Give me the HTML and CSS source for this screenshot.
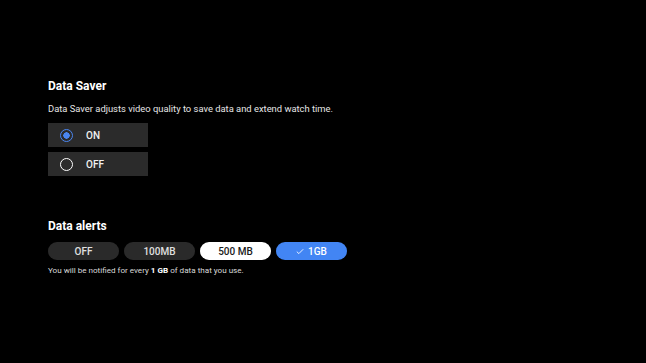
FILE: index.html
```html
<!DOCTYPE html>
<html>
<head>
<meta charset="utf-8">
<link rel="stylesheet" href="styles.css">
</head>
<body>
<main class="page">
  <section class="saver">
    <h2 class="title">Data Saver</h2>
    <p class="desc">Data Saver adjusts video quality to save data and extend watch time.</p>
    <div class="options">
      <div class="option">
        <span class="radio radio-on"></span>
        <span class="opt-label">ON</span>
      </div>
      <div class="option">
        <span class="radio"></span>
        <span class="opt-label">OFF</span>
      </div>
    </div>
  </section>
  <section class="alerts">
    <h2 class="title">Data alerts</h2>
    <div class="chips">
      <div class="chip">OFF</div>
      <div class="chip">100MB</div>
      <div class="chip chip-light">500 MB</div>
      <div class="chip chip-blue"><svg class="check" viewBox="0 0 10 8" width="8" height="7"><path d="M1 4.2 L3.6 6.6 L9 1.2" fill="none" stroke="#ffffff" stroke-width="1.1"/></svg>1GB</div>
    </div>
    <p class="note">You will be notified for every <b>1 GB</b> of data that you use.</p>
  </section>
</main>
</body>
</html>
```
FILE: styles.css
```css
html, body {
  margin: 0;
  padding: 0;
  background: #000000;
}
body {
  width: 646px;
  height: 363px;
  overflow: hidden;
  font-family: Roboto, "Liberation Sans", sans-serif;
  color: #ffffff;
}
.page {
  padding: 79px 0 0 48px;
}
.title {
  margin: 0;
  font-size: 12px;
  line-height: 15px;
  font-weight: 700;
  color: #ffffff;
}
.desc {
  margin: 8px 0 0 0;
  font-size: 9.4px;
  line-height: 13px;
  color: #e6e6e6;
}
.options {
  margin-top: 8px;
  display: flex;
  flex-direction: column;
  gap: 5px;
}
.option {
  width: 100px;
  height: 24px;
  background: #2b2b2b;
  display: flex;
  align-items: center;
  box-sizing: border-box;
  padding-left: 12px;
}
.radio {
  width: 13px;
  height: 13px;
  box-sizing: border-box;
  border: 1.6px solid #ffffff;
  border-radius: 50%;
  flex: none;
}
.radio-on {
  border-color: #4a86f0;
  background: radial-gradient(circle, #4a86f0 0 3px, transparent 3.4px);
}
.opt-label {
  margin-left: 13px;
  font-size: 10px;
  font-weight: 500;
  color: #f2f2f2;
}
.alerts {
  margin-top: 43px;
}
.chips {
  margin-top: 8px;
  display: flex;
  gap: 5px;
}
.chip {
  width: 71px;
  height: 18px;
  border-radius: 9px;
  background: #2a2a2a;
  color: #e0e0e0;
  font-size: 10px;
  font-weight: 500;
  display: flex;
  align-items: center;
  justify-content: center;
}
.chip-light {
  background: #ffffff;
  color: #1a1a1a;
}
.chip-blue {
  background: #4285f4;
  color: #ffffff;
}
.check {
  margin-right: 4px;
}
.note {
  margin: 5px 0 0 0;
  font-size: 8.1px;
  line-height: 10px;
  color: #d8d8d8;
}
.note b {
  color: #ffffff;
  font-weight: 700;
}
```
